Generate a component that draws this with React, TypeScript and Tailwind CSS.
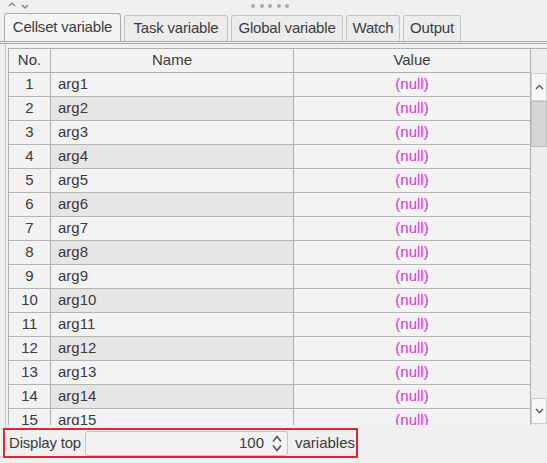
import React from "react";

const tabs = [
  { label: "Cellset variable", w: 117, active: true },
  { label: "Task variable", w: 104 },
  { label: "Global variable", w: 112 },
  { label: "Watch", w: 54 },
  { label: "Output", w: 58 },
];

const rows = Array.from({ length: 15 }, (_, i) => i + 1);

export default function App() {
  return (
    <div
      className="w-[547px] h-[463px] bg-[#f0f0f0] text-[#3a3a3a] overflow-hidden flex flex-col"
      style={{ fontFamily: '"Liberation Sans", Arial, sans-serif' }}
    >
      {/* top handle strip */}
      <div className="h-[13px] relative shrink-0">
        <div className="absolute left-[8px] top-[1px] flex gap-[5px]">
          <svg width="8" height="6" viewBox="0 0 8 6">
            <path d="M1 5 L4 2 L7 5" fill="none" stroke="#888" strokeWidth="1.5" />
          </svg>
          <svg width="8" height="6" viewBox="0 0 8 6" className="mt-[3px]">
            <path d="M1 1 L4 4 L7 1" fill="none" stroke="#888" strokeWidth="1.5" />
          </svg>
        </div>
        <div className="absolute left-[251px] top-[4px] flex gap-[4.5px]">
          {[0, 1, 2, 3, 4].map((i) => (
            <div key={i} className="w-[4px] h-[4px] rounded-full bg-[#aaa]" />
          ))}
        </div>
      </div>

      {/* tabs */}
      <div className="h-[28px] shrink-0 flex items-end pl-[4px] gap-[3px]">
        {tabs.map((t) => (
          <div
            key={t.label}
            style={{ width: t.w }}
            className={
              t.active
                ? "h-[28px] border border-b-0 border-[#a9a9a9] rounded-t-[3px] bg-[#f4f4f4] flex items-center justify-center text-[15px] text-[#3c3c3c] tracking-[-0.2px]"
                : "h-[26px] border border-b-0 border-[#c4c4c4] rounded-t-[3px] bg-[#ececec] flex items-center justify-center text-[15px] text-[#3c3c3c] tracking-[-0.2px]"
            }
          >
            {t.label}
          </div>
        ))}
      </div>

      {/* panel */}
      <div className="flex-1 flex flex-col border-t-[3px] border-double border-[#a8a8a8]">
        <div className="flex-1 flex flex-col ml-[5px] border-l border-[#c8c8c8] pt-[4px] pl-[2px]">
          {/* table viewport */}
          <div className="h-[377px] flex border-l border-t border-[#b0b0b0] overflow-hidden">
            <div className="w-[523px] flex flex-col">
              {/* header */}
              <div className="h-[24px] shrink-0 flex border-b border-[#b0b0b0] bg-[#f2f2f2] text-[15px]">
                <div className="w-[42px] border-r border-[#b0b0b0] flex items-center justify-center">No.</div>
                <div className="w-[243px] border-r border-[#b0b0b0] flex items-center justify-center">Name</div>
                <div className="flex-1 border-r border-[#b0b0b0] flex items-center justify-center">Value</div>
              </div>
              {rows.map((n) => (
                <div key={n} className="h-[24px] shrink-0 flex border-b border-[#b4b4b4] text-[15px]">
                  <div className="w-[42px] border-r border-[#b0b0b0] bg-[#f2f2f2] flex items-center justify-center">
                    {n}
                  </div>
                  <div
                    className={
                      n % 2 === 0
                        ? "w-[243px] border-r border-[#b0b0b0] bg-[#e6e6e6] flex items-center pl-[7px]"
                        : "w-[243px] border-r border-[#b0b0b0] bg-[#f3f3f3] flex items-center pl-[7px]"
                    }
                  >
                    arg{n}
                  </div>
                  <div className="flex-1 border-r border-[#b0b0b0] bg-[#f3f3f3] flex items-center justify-center text-[#e030e0]">
                    (null)
                  </div>
                </div>
              ))}
            </div>
            {/* scrollbar */}
            <div className="w-[16px] flex flex-col pt-[24px] bg-[#ededed]">
              <div className="h-[28px] shrink-0 border border-[#d0d0d0] bg-[#f6f6f6] flex items-center justify-center">
                <svg width="9" height="6" viewBox="0 0 9 6">
                  <path d="M1 5 L4.5 1.5 L8 5" fill="none" stroke="#555" strokeWidth="1.4" />
                </svg>
              </div>
              <div className="h-[46px] shrink-0 border border-[#c0c0c0] bg-[#d6d6d6]" />
              <div className="flex-1" />
              <div className="h-[26px] shrink-0 border border-[#d0d0d0] bg-[#f6f6f6] flex items-center justify-center mb-[1px]">
                <svg width="9" height="6" viewBox="0 0 9 6">
                  <path d="M1 1 L4.5 4.5 L8 1" fill="none" stroke="#555" strokeWidth="1.4" />
                </svg>
              </div>
            </div>
          </div>
        </div>
      </div>

      {/* bottom bar */}
      <div className="h-[35px] shrink-0 flex items-start pl-[3px]">
        <div className="w-[355px] h-[30px] border-2 border-[#e2262b] flex items-center pl-[4px] gap-[4px] text-[15px]">
          <span className="tracking-[-0.2px]">Display top</span>
          <div className="w-[203px] h-[25px] border border-[#c6c6c6] rounded-[3px] bg-[#f2f2f2] flex items-center justify-end pr-[2px]">
            <span className="mr-[7px]">100</span>
            <div className="flex flex-col gap-[1px] items-center mr-[2px]">
              <svg width="12" height="9" viewBox="0 0 12 9">
                <path d="M2 7.5 L6 2.5 L10 7.5" fill="none" stroke="#555" strokeWidth="1.6" />
              </svg>
              <svg width="12" height="9" viewBox="0 0 12 9">
                <path d="M2 1.5 L6 6.5 L10 1.5" fill="none" stroke="#555" strokeWidth="1.6" />
              </svg>
            </div>
          </div>
          <span className="ml-[3px]">variables</span>
        </div>
      </div>
    </div>
  );
}
